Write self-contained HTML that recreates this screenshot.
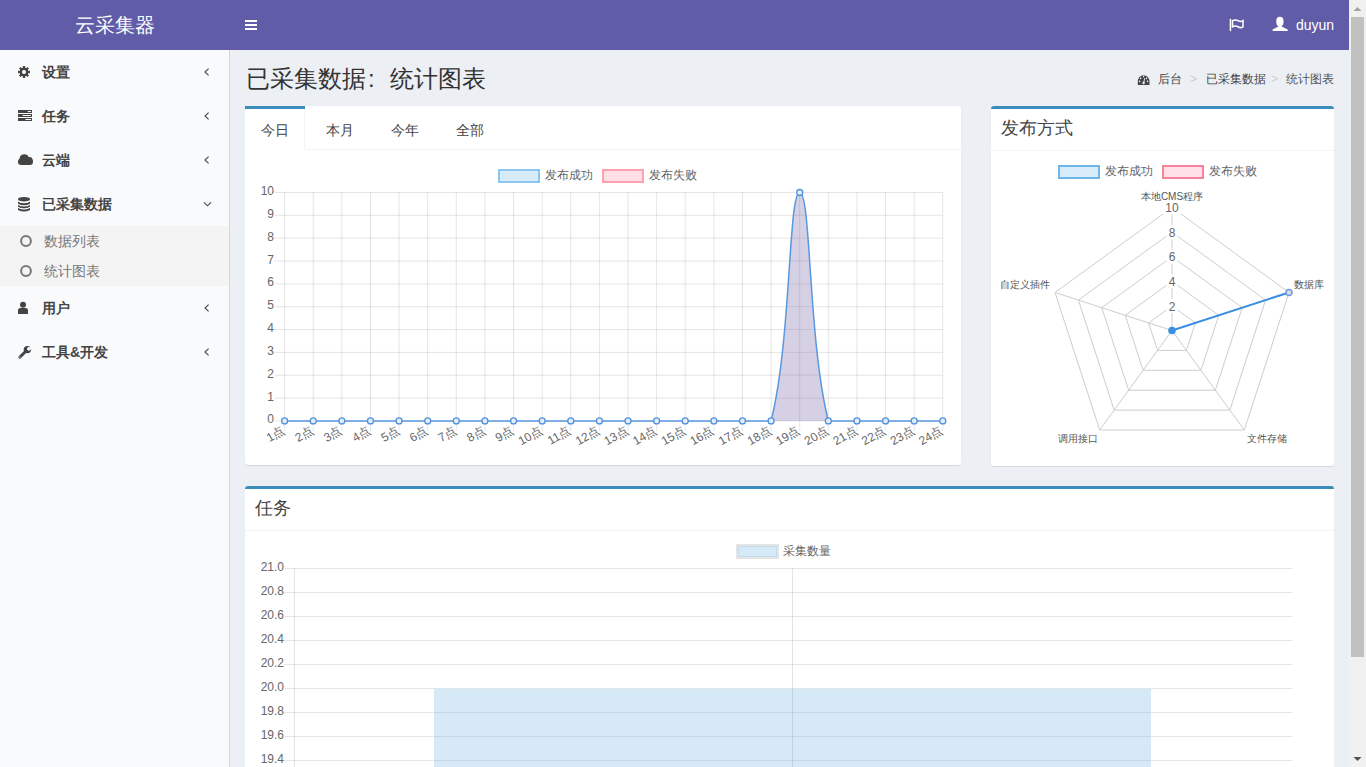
<!DOCTYPE html>
<html><head><meta charset="utf-8"><title>统计图表</title><style>
*{box-sizing:border-box;margin:0;padding:0}
html,body{width:1366px;height:767px;overflow:hidden;background:#ecf0f5;font-family:"Liberation Sans",sans-serif;color:#333;font-size:14px}
.a{position:absolute;white-space:nowrap}
#hdr{position:absolute;left:0;top:0;width:1349px;height:50px;background:#605ca8}
#side{position:absolute;left:0;top:50px;width:230px;height:717px;background:#f9fafc;border-right:1px solid #d2d6de}
.mt{position:absolute;left:42px;color:#444;font-weight:bold;font-size:14px;line-height:20px}
.sub{position:absolute;left:0;top:176px;width:229px;height:60px;background:#f4f4f5}
.st{position:absolute;left:44px;color:#777;font-size:14px;line-height:20px}
#scroll{position:absolute;left:1349px;top:0;width:17px;height:767px;background:#f1f1f1}
.box{position:absolute;background:#fff;border-top:3px solid #3c8dbc;border-radius:3px;box-shadow:0 1px 1px rgba(0,0,0,0.1)}
svg{position:absolute;left:0;top:0;overflow:visible}
</style></head><body>
<div id="hdr"></div>
<div class="a" style="left:75px;top:12px;font-size:20px;line-height:26px;color:#fff">云采集器</div>
<div class="a" style="left:1296px;top:15px;font-size:14px;line-height:20px;color:#fff">duyun</div>
<div id="side">
<div class="mt" style="top:12px">设置</div>
<div class="mt" style="top:56px">任务</div>
<div class="mt" style="top:100px">云端</div>
<div class="mt" style="top:144px">已采集数据</div>
<div class="mt" style="top:248px">用户</div>
<div class="mt" style="top:292px">工具&amp;开发</div>
<div class="sub"></div>
<div class="st" style="top:181px">数据列表</div>
<div class="st" style="top:211px">统计图表</div>
</div>
<div class="a" style="left:246px;top:62px;font-size:24px;line-height:34px;color:#333">已采集数据<span style="display:inline-block;width:24px;padding-left:2px">:</span>统计图表</div>
<div class="a" style="left:1158px;top:71px;font-size:12px;line-height:17px;color:#444">后台</div>
<div class="a" style="left:1190px;top:71px;font-size:12px;line-height:17px;color:#ccc">&gt;</div>
<div class="a" style="left:1206px;top:71px;font-size:12px;line-height:17px;color:#444">已采集数据</div>
<div class="a" style="left:1271px;top:71px;font-size:12px;line-height:17px;color:#ccc">&gt;</div>
<div class="a" style="left:1286px;top:71px;font-size:12px;line-height:17px;color:#555">统计图表</div>
<div class="box" style="left:245px;top:106px;width:716px;height:359px;border-top:0"></div>
<div class="box" style="left:991px;top:106px;width:343px;height:360px"></div>
<div class="box" style="left:245px;top:486px;width:1089px;height:300px"></div>
<div class="a" style="left:245px;top:106px;width:60px;height:3px;background:#3c8dbc;"></div>
<div class="a" style="left:304px;top:109px;width:1px;height:40px;background:#f4f4f4"></div>
<div class="a" style="left:305px;top:149px;width:656px;height:1px;background:#f4f4f4"></div>
<div class="a" style="left:261px;top:120px;font-size:14px;line-height:20px;color:#444">今日</div>
<div class="a" style="left:326px;top:120px;font-size:14px;line-height:20px;color:#444">本月</div>
<div class="a" style="left:391px;top:120px;font-size:14px;line-height:20px;color:#444">今年</div>
<div class="a" style="left:456px;top:120px;font-size:14px;line-height:20px;color:#444">全部</div>
<div class="a" style="left:991px;top:150px;width:343px;height:1px;background:#f4f4f4"></div>
<div class="a" style="left:1001px;top:118px;font-size:18px;line-height:20px;color:#444">发布方式</div>
<div class="a" style="left:245px;top:530px;width:1089px;height:1px;background:#f4f4f4"></div>
<div class="a" style="left:255px;top:498px;font-size:18px;line-height:20px;color:#444">任务</div>
<svg width="1366" height="767" viewBox="0 0 1366 767"><line x1="274.5" y1="192.5" x2="942.8" y2="192.5" stroke="rgba(0,0,0,0.1)" stroke-width="1"/>
<text x="274" y="191.0" font-size="12" fill="#666" text-anchor="end" dominant-baseline="central" font-family="Liberation Sans, sans-serif">10</text>
<line x1="274.5" y1="215.3" x2="942.8" y2="215.3" stroke="rgba(0,0,0,0.1)" stroke-width="1"/>
<text x="274" y="213.8" font-size="12" fill="#666" text-anchor="end" dominant-baseline="central" font-family="Liberation Sans, sans-serif">9</text>
<line x1="274.5" y1="238.2" x2="942.8" y2="238.2" stroke="rgba(0,0,0,0.1)" stroke-width="1"/>
<text x="274" y="236.7" font-size="12" fill="#666" text-anchor="end" dominant-baseline="central" font-family="Liberation Sans, sans-serif">8</text>
<line x1="274.5" y1="261.0" x2="942.8" y2="261.0" stroke="rgba(0,0,0,0.1)" stroke-width="1"/>
<text x="274" y="259.5" font-size="12" fill="#666" text-anchor="end" dominant-baseline="central" font-family="Liberation Sans, sans-serif">7</text>
<line x1="274.5" y1="283.9" x2="942.8" y2="283.9" stroke="rgba(0,0,0,0.1)" stroke-width="1"/>
<text x="274" y="282.4" font-size="12" fill="#666" text-anchor="end" dominant-baseline="central" font-family="Liberation Sans, sans-serif">6</text>
<line x1="274.5" y1="306.7" x2="942.8" y2="306.7" stroke="rgba(0,0,0,0.1)" stroke-width="1"/>
<text x="274" y="305.2" font-size="12" fill="#666" text-anchor="end" dominant-baseline="central" font-family="Liberation Sans, sans-serif">5</text>
<line x1="274.5" y1="329.5" x2="942.8" y2="329.5" stroke="rgba(0,0,0,0.1)" stroke-width="1"/>
<text x="274" y="328.0" font-size="12" fill="#666" text-anchor="end" dominant-baseline="central" font-family="Liberation Sans, sans-serif">4</text>
<line x1="274.5" y1="352.4" x2="942.8" y2="352.4" stroke="rgba(0,0,0,0.1)" stroke-width="1"/>
<text x="274" y="350.9" font-size="12" fill="#666" text-anchor="end" dominant-baseline="central" font-family="Liberation Sans, sans-serif">3</text>
<line x1="274.5" y1="375.2" x2="942.8" y2="375.2" stroke="rgba(0,0,0,0.1)" stroke-width="1"/>
<text x="274" y="373.7" font-size="12" fill="#666" text-anchor="end" dominant-baseline="central" font-family="Liberation Sans, sans-serif">2</text>
<line x1="274.5" y1="398.1" x2="942.8" y2="398.1" stroke="rgba(0,0,0,0.1)" stroke-width="1"/>
<text x="274" y="396.6" font-size="12" fill="#666" text-anchor="end" dominant-baseline="central" font-family="Liberation Sans, sans-serif">1</text>
<line x1="274.5" y1="420.9" x2="942.8" y2="420.9" stroke="rgba(0,0,0,0.1)" stroke-width="1"/>
<text x="274" y="419.4" font-size="12" fill="#666" text-anchor="end" dominant-baseline="central" font-family="Liberation Sans, sans-serif">0</text>
<line x1="284.6" y1="192.5" x2="284.6" y2="430.9" stroke="rgba(0,0,0,0.1)" stroke-width="1"/>
<line x1="313.2" y1="192.5" x2="313.2" y2="430.9" stroke="rgba(0,0,0,0.1)" stroke-width="1"/>
<line x1="341.8" y1="192.5" x2="341.8" y2="430.9" stroke="rgba(0,0,0,0.1)" stroke-width="1"/>
<line x1="370.5" y1="192.5" x2="370.5" y2="430.9" stroke="rgba(0,0,0,0.1)" stroke-width="1"/>
<line x1="399.1" y1="192.5" x2="399.1" y2="430.9" stroke="rgba(0,0,0,0.1)" stroke-width="1"/>
<line x1="427.7" y1="192.5" x2="427.7" y2="430.9" stroke="rgba(0,0,0,0.1)" stroke-width="1"/>
<line x1="456.3" y1="192.5" x2="456.3" y2="430.9" stroke="rgba(0,0,0,0.1)" stroke-width="1"/>
<line x1="484.9" y1="192.5" x2="484.9" y2="430.9" stroke="rgba(0,0,0,0.1)" stroke-width="1"/>
<line x1="513.5" y1="192.5" x2="513.5" y2="430.9" stroke="rgba(0,0,0,0.1)" stroke-width="1"/>
<line x1="542.2" y1="192.5" x2="542.2" y2="430.9" stroke="rgba(0,0,0,0.1)" stroke-width="1"/>
<line x1="570.8" y1="192.5" x2="570.8" y2="430.9" stroke="rgba(0,0,0,0.1)" stroke-width="1"/>
<line x1="599.4" y1="192.5" x2="599.4" y2="430.9" stroke="rgba(0,0,0,0.1)" stroke-width="1"/>
<line x1="628.0" y1="192.5" x2="628.0" y2="430.9" stroke="rgba(0,0,0,0.1)" stroke-width="1"/>
<line x1="656.6" y1="192.5" x2="656.6" y2="430.9" stroke="rgba(0,0,0,0.1)" stroke-width="1"/>
<line x1="685.2" y1="192.5" x2="685.2" y2="430.9" stroke="rgba(0,0,0,0.1)" stroke-width="1"/>
<line x1="713.9" y1="192.5" x2="713.9" y2="430.9" stroke="rgba(0,0,0,0.1)" stroke-width="1"/>
<line x1="742.5" y1="192.5" x2="742.5" y2="430.9" stroke="rgba(0,0,0,0.1)" stroke-width="1"/>
<line x1="771.1" y1="192.5" x2="771.1" y2="430.9" stroke="rgba(0,0,0,0.1)" stroke-width="1"/>
<line x1="799.7" y1="192.5" x2="799.7" y2="430.9" stroke="rgba(0,0,0,0.1)" stroke-width="1"/>
<line x1="828.3" y1="192.5" x2="828.3" y2="430.9" stroke="rgba(0,0,0,0.1)" stroke-width="1"/>
<line x1="856.9" y1="192.5" x2="856.9" y2="430.9" stroke="rgba(0,0,0,0.1)" stroke-width="1"/>
<line x1="885.6" y1="192.5" x2="885.6" y2="430.9" stroke="rgba(0,0,0,0.1)" stroke-width="1"/>
<line x1="914.2" y1="192.5" x2="914.2" y2="430.9" stroke="rgba(0,0,0,0.1)" stroke-width="1"/>
<line x1="942.8" y1="192.5" x2="942.8" y2="430.9" stroke="rgba(0,0,0,0.1)" stroke-width="1"/>
<path d="M284.60,420.90 C296.05,420.90 301.77,420.90 313.22,420.90 C324.66,420.90 330.39,420.90 341.83,420.90 C353.28,420.90 359.01,420.90 370.45,420.90 C381.90,420.90 387.62,420.90 399.07,420.90 C410.52,420.90 416.24,420.90 427.69,420.90 C439.13,420.90 444.86,420.90 456.30,420.90 C467.75,420.90 473.47,420.90 484.92,420.90 C496.37,420.90 502.09,420.90 513.54,420.90 C524.99,420.90 530.71,420.90 542.16,420.90 C553.60,420.90 559.33,420.90 570.77,420.90 C582.22,420.90 587.94,420.90 599.39,420.90 C610.84,420.90 616.56,420.90 628.01,420.90 C639.46,420.90 645.18,420.90 656.63,420.90 C668.07,420.90 673.80,420.90 685.24,420.90 C696.69,420.90 702.41,420.90 713.86,420.90 C725.31,420.90 731.03,420.90 742.48,420.90 C753.93,420.90 768.56,420.90 771.10,420.90 C791.46,339.64 788.27,192.50 799.71,192.50 C811.16,192.50 807.97,339.64 828.33,420.90 C830.86,420.90 845.50,420.90 856.95,420.90 C868.39,420.90 874.12,420.90 885.57,420.90 C897.01,420.90 902.74,420.90 914.18,420.90 C925.63,420.90 931.35,420.90 942.80,420.90 L942.80,420.90 L284.60,420.90 Z" fill="rgba(120,100,170,0.3)" stroke="none"/>
<path d="M284.60,420.90 C296.05,420.90 301.77,420.90 313.22,420.90 C324.66,420.90 330.39,420.90 341.83,420.90 C353.28,420.90 359.01,420.90 370.45,420.90 C381.90,420.90 387.62,420.90 399.07,420.90 C410.52,420.90 416.24,420.90 427.69,420.90 C439.13,420.90 444.86,420.90 456.30,420.90 C467.75,420.90 473.47,420.90 484.92,420.90 C496.37,420.90 502.09,420.90 513.54,420.90 C524.99,420.90 530.71,420.90 542.16,420.90 C553.60,420.90 559.33,420.90 570.77,420.90 C582.22,420.90 587.94,420.90 599.39,420.90 C610.84,420.90 616.56,420.90 628.01,420.90 C639.46,420.90 645.18,420.90 656.63,420.90 C668.07,420.90 673.80,420.90 685.24,420.90 C696.69,420.90 702.41,420.90 713.86,420.90 C725.31,420.90 731.03,420.90 742.48,420.90 C753.93,420.90 768.56,420.90 771.10,420.90 C791.46,339.64 788.27,192.50 799.71,192.50 C811.16,192.50 807.97,339.64 828.33,420.90 C830.86,420.90 845.50,420.90 856.95,420.90 C868.39,420.90 874.12,420.90 885.57,420.90 C897.01,420.90 902.74,420.90 914.18,420.90 C925.63,420.90 931.35,420.90 942.80,420.90" fill="none" stroke="#5898e0" stroke-width="1.5"/>
<circle cx="284.60" cy="420.90" r="3" fill="#e6e9f6" stroke="#4f93dc" stroke-width="1.3"/>
<circle cx="313.22" cy="420.90" r="3" fill="#e6e9f6" stroke="#4f93dc" stroke-width="1.3"/>
<circle cx="341.83" cy="420.90" r="3" fill="#e6e9f6" stroke="#4f93dc" stroke-width="1.3"/>
<circle cx="370.45" cy="420.90" r="3" fill="#e6e9f6" stroke="#4f93dc" stroke-width="1.3"/>
<circle cx="399.07" cy="420.90" r="3" fill="#e6e9f6" stroke="#4f93dc" stroke-width="1.3"/>
<circle cx="427.69" cy="420.90" r="3" fill="#e6e9f6" stroke="#4f93dc" stroke-width="1.3"/>
<circle cx="456.30" cy="420.90" r="3" fill="#e6e9f6" stroke="#4f93dc" stroke-width="1.3"/>
<circle cx="484.92" cy="420.90" r="3" fill="#e6e9f6" stroke="#4f93dc" stroke-width="1.3"/>
<circle cx="513.54" cy="420.90" r="3" fill="#e6e9f6" stroke="#4f93dc" stroke-width="1.3"/>
<circle cx="542.16" cy="420.90" r="3" fill="#e6e9f6" stroke="#4f93dc" stroke-width="1.3"/>
<circle cx="570.77" cy="420.90" r="3" fill="#e6e9f6" stroke="#4f93dc" stroke-width="1.3"/>
<circle cx="599.39" cy="420.90" r="3" fill="#e6e9f6" stroke="#4f93dc" stroke-width="1.3"/>
<circle cx="628.01" cy="420.90" r="3" fill="#e6e9f6" stroke="#4f93dc" stroke-width="1.3"/>
<circle cx="656.63" cy="420.90" r="3" fill="#e6e9f6" stroke="#4f93dc" stroke-width="1.3"/>
<circle cx="685.24" cy="420.90" r="3" fill="#e6e9f6" stroke="#4f93dc" stroke-width="1.3"/>
<circle cx="713.86" cy="420.90" r="3" fill="#e6e9f6" stroke="#4f93dc" stroke-width="1.3"/>
<circle cx="742.48" cy="420.90" r="3" fill="#e6e9f6" stroke="#4f93dc" stroke-width="1.3"/>
<circle cx="771.10" cy="420.90" r="3" fill="#e6e9f6" stroke="#4f93dc" stroke-width="1.3"/>
<circle cx="799.71" cy="192.50" r="3" fill="#e6e9f6" stroke="#4f93dc" stroke-width="1.3"/>
<circle cx="828.33" cy="420.90" r="3" fill="#e6e9f6" stroke="#4f93dc" stroke-width="1.3"/>
<circle cx="856.95" cy="420.90" r="3" fill="#e6e9f6" stroke="#4f93dc" stroke-width="1.3"/>
<circle cx="885.57" cy="420.90" r="3" fill="#e6e9f6" stroke="#4f93dc" stroke-width="1.3"/>
<circle cx="914.18" cy="420.90" r="3" fill="#e6e9f6" stroke="#4f93dc" stroke-width="1.3"/>
<circle cx="942.80" cy="420.90" r="3" fill="#e6e9f6" stroke="#4f93dc" stroke-width="1.3"/>
<text transform="translate(283.60,429.40) rotate(-30)" font-size="12" fill="#666" text-anchor="end" dominant-baseline="central" font-family="Liberation Sans, sans-serif">1点</text>
<text transform="translate(312.22,429.40) rotate(-30)" font-size="12" fill="#666" text-anchor="end" dominant-baseline="central" font-family="Liberation Sans, sans-serif">2点</text>
<text transform="translate(340.83,429.40) rotate(-30)" font-size="12" fill="#666" text-anchor="end" dominant-baseline="central" font-family="Liberation Sans, sans-serif">3点</text>
<text transform="translate(369.45,429.40) rotate(-30)" font-size="12" fill="#666" text-anchor="end" dominant-baseline="central" font-family="Liberation Sans, sans-serif">4点</text>
<text transform="translate(398.07,429.40) rotate(-30)" font-size="12" fill="#666" text-anchor="end" dominant-baseline="central" font-family="Liberation Sans, sans-serif">5点</text>
<text transform="translate(426.69,429.40) rotate(-30)" font-size="12" fill="#666" text-anchor="end" dominant-baseline="central" font-family="Liberation Sans, sans-serif">6点</text>
<text transform="translate(455.30,429.40) rotate(-30)" font-size="12" fill="#666" text-anchor="end" dominant-baseline="central" font-family="Liberation Sans, sans-serif">7点</text>
<text transform="translate(483.92,429.40) rotate(-30)" font-size="12" fill="#666" text-anchor="end" dominant-baseline="central" font-family="Liberation Sans, sans-serif">8点</text>
<text transform="translate(512.54,429.40) rotate(-30)" font-size="12" fill="#666" text-anchor="end" dominant-baseline="central" font-family="Liberation Sans, sans-serif">9点</text>
<text transform="translate(541.16,429.40) rotate(-30)" font-size="12" fill="#666" text-anchor="end" dominant-baseline="central" font-family="Liberation Sans, sans-serif">10点</text>
<text transform="translate(569.77,429.40) rotate(-30)" font-size="12" fill="#666" text-anchor="end" dominant-baseline="central" font-family="Liberation Sans, sans-serif">11点</text>
<text transform="translate(598.39,429.40) rotate(-30)" font-size="12" fill="#666" text-anchor="end" dominant-baseline="central" font-family="Liberation Sans, sans-serif">12点</text>
<text transform="translate(627.01,429.40) rotate(-30)" font-size="12" fill="#666" text-anchor="end" dominant-baseline="central" font-family="Liberation Sans, sans-serif">13点</text>
<text transform="translate(655.63,429.40) rotate(-30)" font-size="12" fill="#666" text-anchor="end" dominant-baseline="central" font-family="Liberation Sans, sans-serif">14点</text>
<text transform="translate(684.24,429.40) rotate(-30)" font-size="12" fill="#666" text-anchor="end" dominant-baseline="central" font-family="Liberation Sans, sans-serif">15点</text>
<text transform="translate(712.86,429.40) rotate(-30)" font-size="12" fill="#666" text-anchor="end" dominant-baseline="central" font-family="Liberation Sans, sans-serif">16点</text>
<text transform="translate(741.48,429.40) rotate(-30)" font-size="12" fill="#666" text-anchor="end" dominant-baseline="central" font-family="Liberation Sans, sans-serif">17点</text>
<text transform="translate(770.10,429.40) rotate(-30)" font-size="12" fill="#666" text-anchor="end" dominant-baseline="central" font-family="Liberation Sans, sans-serif">18点</text>
<text transform="translate(798.71,429.40) rotate(-30)" font-size="12" fill="#666" text-anchor="end" dominant-baseline="central" font-family="Liberation Sans, sans-serif">19点</text>
<text transform="translate(827.33,429.40) rotate(-30)" font-size="12" fill="#666" text-anchor="end" dominant-baseline="central" font-family="Liberation Sans, sans-serif">20点</text>
<text transform="translate(855.95,429.40) rotate(-30)" font-size="12" fill="#666" text-anchor="end" dominant-baseline="central" font-family="Liberation Sans, sans-serif">21点</text>
<text transform="translate(884.57,429.40) rotate(-30)" font-size="12" fill="#666" text-anchor="end" dominant-baseline="central" font-family="Liberation Sans, sans-serif">22点</text>
<text transform="translate(913.18,429.40) rotate(-30)" font-size="12" fill="#666" text-anchor="end" dominant-baseline="central" font-family="Liberation Sans, sans-serif">23点</text>
<text transform="translate(941.80,429.40) rotate(-30)" font-size="12" fill="#666" text-anchor="end" dominant-baseline="central" font-family="Liberation Sans, sans-serif">24点</text>
<rect x="499" y="170" width="40" height="12" fill="#d7ebf9" stroke="#8cc6f0" stroke-width="2"/>
<text x="545" y="175" font-size="12" fill="#666" dominant-baseline="central" font-family="Liberation Sans, sans-serif">发布成功</text>
<rect x="603" y="170" width="40" height="12" fill="#ffe0e6" stroke="#ff9fb2" stroke-width="2"/>
<text x="649" y="175" font-size="12" fill="#666" dominant-baseline="central" font-family="Liberation Sans, sans-serif">发布失败</text>
<polygon points="1172.00,305.90 1195.40,322.90 1186.46,350.40 1157.54,350.40 1148.60,322.90" fill="none" stroke="#cdcdcd" stroke-width="1"/>
<polygon points="1172.00,281.30 1218.79,315.30 1200.92,370.30 1143.08,370.30 1125.21,315.30" fill="none" stroke="#cdcdcd" stroke-width="1"/>
<polygon points="1172.00,256.70 1242.19,307.69 1215.38,390.21 1128.62,390.21 1101.81,307.69" fill="none" stroke="#cdcdcd" stroke-width="1"/>
<polygon points="1172.00,232.10 1265.58,300.09 1229.84,410.11 1114.16,410.11 1078.42,300.09" fill="none" stroke="#cdcdcd" stroke-width="1"/>
<polygon points="1172.00,207.50 1288.98,292.49 1244.30,430.01 1099.70,430.01 1055.02,292.49" fill="none" stroke="#cdcdcd" stroke-width="1"/>
<line x1="1172.00" y1="330.50" x2="1172.00" y2="207.50" stroke="#cdcdcd" stroke-width="1"/>
<line x1="1172.00" y1="330.50" x2="1288.98" y2="292.49" stroke="#cdcdcd" stroke-width="1"/>
<line x1="1172.00" y1="330.50" x2="1244.30" y2="430.01" stroke="#cdcdcd" stroke-width="1"/>
<line x1="1172.00" y1="330.50" x2="1099.70" y2="430.01" stroke="#cdcdcd" stroke-width="1"/>
<line x1="1172.00" y1="330.50" x2="1055.02" y2="292.49" stroke="#cdcdcd" stroke-width="1"/>
<rect x="1166.50" y="298.90" width="11.00" height="14" fill="#fff"/>
<text x="1172.00" y="306.50" font-size="12" fill="#666" text-anchor="middle" dominant-baseline="central" font-family="Liberation Sans, sans-serif">2</text>
<rect x="1166.50" y="274.30" width="11.00" height="14" fill="#fff"/>
<text x="1172.00" y="281.90" font-size="12" fill="#666" text-anchor="middle" dominant-baseline="central" font-family="Liberation Sans, sans-serif">4</text>
<rect x="1166.50" y="249.70" width="11.00" height="14" fill="#fff"/>
<text x="1172.00" y="257.30" font-size="12" fill="#666" text-anchor="middle" dominant-baseline="central" font-family="Liberation Sans, sans-serif">6</text>
<rect x="1166.50" y="225.10" width="11.00" height="14" fill="#fff"/>
<text x="1172.00" y="232.70" font-size="12" fill="#666" text-anchor="middle" dominant-baseline="central" font-family="Liberation Sans, sans-serif">8</text>
<rect x="1163.00" y="200.50" width="18.00" height="14" fill="#fff"/>
<text x="1172.00" y="208.10" font-size="12" fill="#666" text-anchor="middle" dominant-baseline="central" font-family="Liberation Sans, sans-serif">10</text>
<text x="1172.0" y="196.4" font-size="10" font-weight="500" fill="#555" text-anchor="middle" dominant-baseline="central" font-family="Liberation Sans, sans-serif">本地CMS程序</text>
<text x="1294.0" y="284.4" font-size="10" font-weight="500" fill="#555" text-anchor="start" dominant-baseline="central" font-family="Liberation Sans, sans-serif">数据库</text>
<text x="1246.5" y="438.4" font-size="10" font-weight="500" fill="#555" text-anchor="start" dominant-baseline="central" font-family="Liberation Sans, sans-serif">文件存储</text>
<text x="1097.5" y="438.4" font-size="10" font-weight="500" fill="#555" text-anchor="end" dominant-baseline="central" font-family="Liberation Sans, sans-serif">调用接口</text>
<text x="1050.0" y="284.4" font-size="10" font-weight="500" fill="#555" text-anchor="end" dominant-baseline="central" font-family="Liberation Sans, sans-serif">自定义插件</text>
<line x1="1172.00" y1="330.50" x2="1288.98" y2="292.49" stroke="#3b8fe0" stroke-width="2"/>
<circle cx="1172.00" cy="330.50" r="3.8" fill="#3b8fe0"/>
<circle cx="1288.98" cy="292.49" r="3" fill="#dcdcea" stroke="#6f9be0" stroke-width="1.5"/>
<rect x="1059" y="166" width="40" height="12" fill="#d7ebf9" stroke="#6fb6ea" stroke-width="2"/>
<text x="1105" y="171.3" font-size="12" fill="#666" dominant-baseline="central" font-family="Liberation Sans, sans-serif">发布成功</text>
<rect x="1163" y="166" width="40" height="12" fill="#ffe0e6" stroke="#f7849c" stroke-width="2"/>
<text x="1209" y="171.3" font-size="12" fill="#666" dominant-baseline="central" font-family="Liberation Sans, sans-serif">发布失败</text>
<line x1="284.5" y1="568.5" x2="1292.0" y2="568.5" stroke="rgba(0,0,0,0.1)" stroke-width="1"/>
<text x="284" y="566.5" font-size="12" fill="#666" text-anchor="end" dominant-baseline="central" font-family="Liberation Sans, sans-serif">21.0</text>
<line x1="284.5" y1="592.5" x2="1292.0" y2="592.5" stroke="rgba(0,0,0,0.1)" stroke-width="1"/>
<text x="284" y="590.5" font-size="12" fill="#666" text-anchor="end" dominant-baseline="central" font-family="Liberation Sans, sans-serif">20.8</text>
<line x1="284.5" y1="616.5" x2="1292.0" y2="616.5" stroke="rgba(0,0,0,0.1)" stroke-width="1"/>
<text x="284" y="614.5" font-size="12" fill="#666" text-anchor="end" dominant-baseline="central" font-family="Liberation Sans, sans-serif">20.6</text>
<line x1="284.5" y1="640.5" x2="1292.0" y2="640.5" stroke="rgba(0,0,0,0.1)" stroke-width="1"/>
<text x="284" y="638.5" font-size="12" fill="#666" text-anchor="end" dominant-baseline="central" font-family="Liberation Sans, sans-serif">20.4</text>
<line x1="284.5" y1="664.5" x2="1292.0" y2="664.5" stroke="rgba(0,0,0,0.1)" stroke-width="1"/>
<text x="284" y="662.5" font-size="12" fill="#666" text-anchor="end" dominant-baseline="central" font-family="Liberation Sans, sans-serif">20.2</text>
<line x1="284.5" y1="688.5" x2="1292.0" y2="688.5" stroke="rgba(0,0,0,0.1)" stroke-width="1"/>
<text x="284" y="686.5" font-size="12" fill="#666" text-anchor="end" dominant-baseline="central" font-family="Liberation Sans, sans-serif">20.0</text>
<line x1="284.5" y1="712.5" x2="1292.0" y2="712.5" stroke="rgba(0,0,0,0.1)" stroke-width="1"/>
<text x="284" y="710.5" font-size="12" fill="#666" text-anchor="end" dominant-baseline="central" font-family="Liberation Sans, sans-serif">19.8</text>
<line x1="284.5" y1="736.5" x2="1292.0" y2="736.5" stroke="rgba(0,0,0,0.1)" stroke-width="1"/>
<text x="284" y="734.5" font-size="12" fill="#666" text-anchor="end" dominant-baseline="central" font-family="Liberation Sans, sans-serif">19.6</text>
<line x1="284.5" y1="760.5" x2="1292.0" y2="760.5" stroke="rgba(0,0,0,0.1)" stroke-width="1"/>
<text x="284" y="758.5" font-size="12" fill="#666" text-anchor="end" dominant-baseline="central" font-family="Liberation Sans, sans-serif">19.4</text>
<line x1="294.5" y1="568.5" x2="294.5" y2="780" stroke="rgba(0,0,0,0.1)" stroke-width="1"/>
<rect x="434" y="688.5" width="717" height="100" fill="#d5e9f7" stroke="none"/>
<line x1="792.5" y1="568.5" x2="792.5" y2="780" stroke="rgba(0,0,0,0.1)" stroke-width="1"/>
<line x1="434" y1="712.5" x2="1151" y2="712.5" stroke="rgba(0,0,0,0.07)" stroke-width="1"/>
<line x1="434" y1="736.5" x2="1151" y2="736.5" stroke="rgba(0,0,0,0.07)" stroke-width="1"/>
<line x1="434" y1="760.5" x2="1151" y2="760.5" stroke="rgba(0,0,0,0.07)" stroke-width="1"/>
<rect x="737.5" y="545.5" width="40" height="12" fill="#d5e9f7" stroke="#e4e4e4" stroke-width="3"/><rect x="738.5" y="546.5" width="38" height="10" fill="none" stroke="#c6dcee" stroke-width="1"/>
<text x="783" y="551" font-size="12" fill="#666" dominant-baseline="central" font-family="Liberation Sans, sans-serif">采集数量</text></svg>
<svg width="1366" height="767"><rect x="245" y="20" width="12" height="2" fill="#fff"/>
<rect x="245" y="24" width="12" height="2" fill="#fff"/>
<rect x="245" y="28" width="12" height="2" fill="#fff"/>
<g transform="translate(24,72)"><rect x="-1.2" y="-6" width="2.4" height="3" fill="#444" transform="rotate(0)"/><rect x="-1.2" y="-6" width="2.4" height="3" fill="#444" transform="rotate(45)"/><rect x="-1.2" y="-6" width="2.4" height="3" fill="#444" transform="rotate(90)"/><rect x="-1.2" y="-6" width="2.4" height="3" fill="#444" transform="rotate(135)"/><rect x="-1.2" y="-6" width="2.4" height="3" fill="#444" transform="rotate(180)"/><rect x="-1.2" y="-6" width="2.4" height="3" fill="#444" transform="rotate(225)"/><rect x="-1.2" y="-6" width="2.4" height="3" fill="#444" transform="rotate(270)"/><rect x="-1.2" y="-6" width="2.4" height="3" fill="#444" transform="rotate(315)"/><circle r="4.3" fill="#444"/><circle r="2" fill="#f9fafc"/></g>
<rect x="18" y="110" width="14" height="3" fill="#444"/>
<rect x="27.7" y="111" width="3.3" height="1" fill="#f9fafc"/>
<rect x="18" y="114" width="14" height="3" fill="#444"/>
<rect x="22.6" y="115" width="8.4" height="1" fill="#f9fafc"/>
<rect x="18" y="118" width="14" height="3" fill="#444"/>
<rect x="25.5" y="119" width="5.5" height="1" fill="#f9fafc"/>
<rect x="18" y="158.5" width="15" height="6.5" rx="3.2" fill="#444"/><circle cx="24.3" cy="159" r="4.8" fill="#444"/><circle cx="29.2" cy="160.5" r="3.4" fill="#444"/>
<ellipse cx="24" cy="199.2" rx="6" ry="2.3" fill="#444"/>
<path d="M18,201.80 Q24,204.80 30,201.80 L30,203.70 Q24,206.70 18,203.70 Z" fill="#444"/>
<path d="M18,204.90 Q24,207.90 30,204.90 L30,206.80 Q24,209.80 18,206.80 Z" fill="#444"/>
<path d="M18,208.00 Q24,211.00 30,208.00 L30,209.90 Q24,212.90 18,209.90 Z" fill="#444"/>
<circle cx="23" cy="304.8" r="3" fill="#444"/><path d="M18,314 L18,310 Q18,308 20.5,308 L25.5,308 Q28,308 28,310 L28,314 Z" fill="#444"/>
<line x1="19.8" y1="357.2" x2="26" y2="351" stroke="#444" stroke-width="3" stroke-linecap="round"/>
<circle cx="27.4" cy="349.6" r="3.7" fill="#444"/><path d="M27.2,349.8 L31.5,345.5 L33,347.5 L29,351 Z" fill="#f9fafc"/><circle cx="28.6" cy="348.4" r="1.5" fill="#f9fafc"/>
<circle cx="19.9" cy="357.1" r="0.6" fill="#f9fafc"/>
<circle cx="26" cy="241" r="4.9" fill="none" stroke="#777" stroke-width="2"/>
<circle cx="26" cy="271" r="4.9" fill="none" stroke="#777" stroke-width="2"/>
<path d="M208.6,68.7 L205,72.0 L208.6,75.3" fill="none" stroke="#444" stroke-width="1.1"/>
<path d="M208.6,112.7 L205,116.0 L208.6,119.3" fill="none" stroke="#444" stroke-width="1.1"/>
<path d="M208.6,156.7 L205,160.0 L208.6,163.3" fill="none" stroke="#444" stroke-width="1.1"/>
<path d="M208.6,304.7 L205,308.0 L208.6,311.3" fill="none" stroke="#444" stroke-width="1.1"/>
<path d="M208.6,348.7 L205,352.0 L208.6,355.3" fill="none" stroke="#444" stroke-width="1.1"/>
<path d="M204,202.3 L207.5,205.8 L211,202.3" fill="none" stroke="#444" stroke-width="1.1"/>
<rect x="1229.7" y="18.8" width="1.5" height="12.3" fill="#fff"/>
<path d="M1232.5,20.6 C1235,19.3 1237,20 1238.5,20.9 C1240,21.8 1241.5,21.6 1243,20.6 L1243,26.8 C1241.5,27.8 1240,27.9 1238.5,27 C1237,26.1 1235,25.5 1232.5,26.8 Z" fill="none" stroke="#fff" stroke-width="1.5"/>
<path d="M1276.3,20.5 Q1276.3,16.7 1279.9,16.7 Q1283.5,16.7 1283.5,20.5 L1283.5,22.5 Q1283.5,25.3 1281.7,26 L1281.7,26.5 L1287.7,29.5 L1287.7,31 L1272.6,31 L1272.6,29.5 L1278.2,26.5 L1278.2,26 Q1276.3,25.3 1276.3,22.5 Z" fill="#fff"/>
<path d="M1137.8,85 L1137.8,81 A5.85,5.85 0 0 1 1149.5,81 L1149.5,85 Z" fill="#444"/>
<circle cx="1139.6" cy="81.4" r="0.8" fill="#ecf0f5"/>
<circle cx="1140.6" cy="78.4" r="0.8" fill="#ecf0f5"/>
<circle cx="1143.6" cy="76.6" r="0.8" fill="#ecf0f5"/>
<circle cx="1146.6" cy="78.4" r="0.8" fill="#ecf0f5"/>
<circle cx="1147.6" cy="81.4" r="0.8" fill="#ecf0f5"/>
<path d="M1143.6,83.2 L1144.8,78" stroke="#ecf0f5" stroke-width="0.9"/><circle cx="1143.6" cy="83" r="1.2" fill="#ecf0f5"/></svg>
<div id="scroll"></div>
<div class="a" style="left:1351px;top:17px;width:13px;height:640px;background:#c1c1c1"></div>
<svg width="1366" height="767"><polygon points="1353.5,11 1361.5,11 1357.5,7" fill="#a3a3a3"/><polygon points="1353.5,757 1361.5,757 1357.5,761" fill="#505050"/></svg>
</body></html>
